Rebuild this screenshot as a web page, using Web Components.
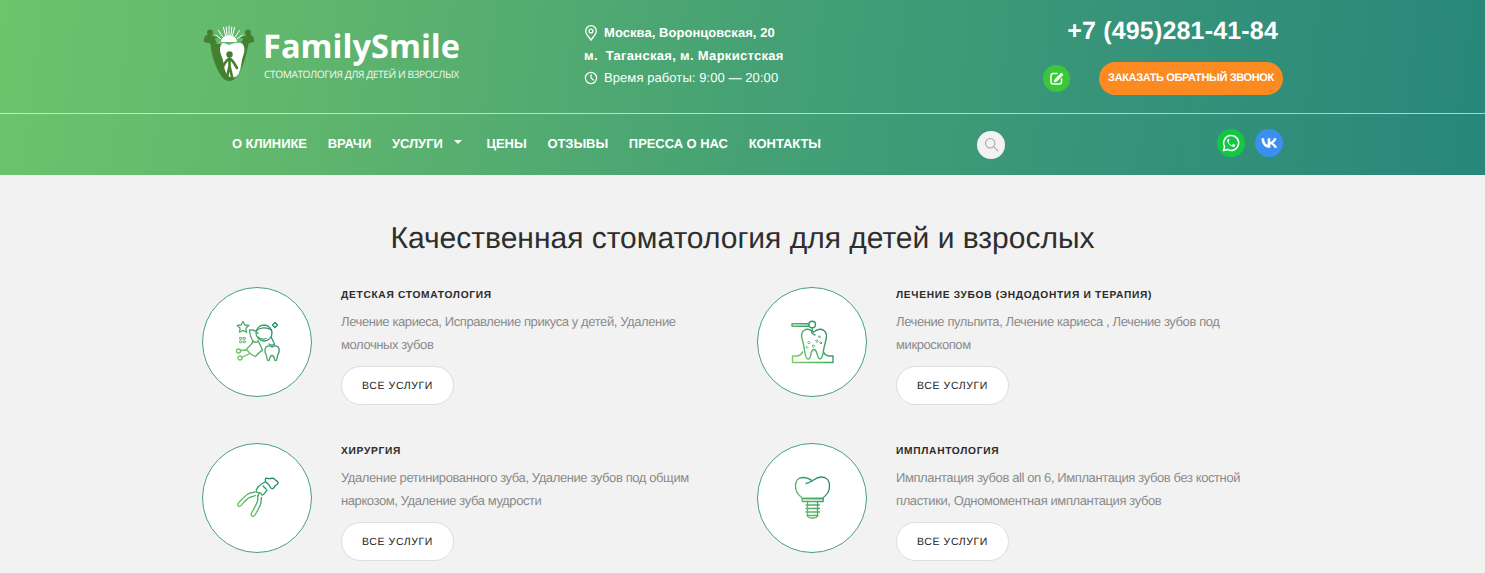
<!DOCTYPE html>
<html lang="ru"><head><meta charset="utf-8"><title>FamilySmile</title>
<style>
html,body{margin:0;padding:0;background:#f2f2f2;font-family:"Liberation Sans",Arial,sans-serif;overflow:hidden;height:573px;text-rendering:geometricPrecision}
</style></head><body>
<fs-header></fs-header>
<fs-services></fs-services>
<script>
const GRAD=`<defs><linearGradient id="g" gradientUnits="userSpaceOnUse" x1="33" y1="72" x2="78" y2="38"><stop offset="0" stop-color="#7ccf5e"/><stop offset="1" stop-color="#16806f"/></linearGradient></defs>`;
const ICONS={
fairy:`<g fill="none" stroke="url(#g)" stroke-width="1.300" stroke-linejoin="round" stroke-linecap="round">
<path d="M41 34.500l1.800 3.500 4 .5-2.900 2.800.7 4-3.600-1.900-3.600 1.900.7-4-2.900-2.800 4-.5z"/>
<path d="M73 35.500l2.500 2.500-2.500 2.500-2.500-2.500z"/>
<path d="M38 50.500h1.800v1.800h-1.800zM41.500 50.500h1.800v1.800h-1.800zM38 54h1.800v1.800h-1.800zM41.500 54h1.800v1.800h-1.800z" stroke-width=".9"/>
<circle cx="62" cy="46" r="8"/><path d="M54.500 43.500c3-3 10-4 15-.5M56 50c2 2 5 2.500 8 1.500M69 50c1.500 3 3 5 3.500 7.500-2 1-4 .5-5.500-.5"/>
<path d="M56 46.500c-2-3-5-4-8.500-3.500.5 4 1 8 3.500 11 1.500 1.500 3.500 1.500 5 .5"/>
<path d="M51 54c-1 3.500-4 6-6.500 8 2 3.500 5 6 9 7.500 2.500-3 5-5.500 7-6-1.500-4.500-3.500-8-4.500-10"/>
<path d="M44.500 63l-6 .5M47 67l-7.500 3.500"/><circle cx="36.500" cy="64" r="2"/><circle cx="38" cy="71" r="2"/>
<path d="M64 60c2-1.500 4-1.500 6 0 2-1.500 5-1.500 6.500.5 1.500 2.500.5 5-.5 7-.8 2-.8 4-1.500 5.500-.8 1-1.800.5-2-.5-.3-1.500-.3-4-2.500-4s-2.200 2.500-2.500 4c-.2 1-1.200 1.500-2 .5-.7-1.500-.7-3.500-1.500-5.500-1-2-2-4.500 0-7.500z"/>
</g>`,
tooth:`<g fill="none" stroke="url(#g)" stroke-width="1.400" stroke-linejoin="round" stroke-linecap="round">
<path d="M35 36.700h16.500v2.600H35z"/><circle cx="55.200" cy="37.500" r="3.300"/>
<path d="M55.200 41v3.500"/>
<path d="M55.500 44.500c-2.500-2-6-2.800-8.500-1-3 2-2.700 6.500-1.500 10 1 3 1.500 6.500 2 10 .5 3 1 8 3.500 8.500 2.500.300 2.500-4 3.500-7 .5-1.500 1.500-2.500 2.500-2.500s2 1 2.500 2.500c1 3 1.500 7 3.500 7 2.500-.3 3-5 3.500-8.500.5-3.500 1.500-7 2.300-10 1-3.500 1-8-2-10-3-2-7-1-10.300 1.500z"/>
<path d="M54.500 45c.5 1.500 2 2.500 3.500 3"/>
<path d="M45.500 65c-1 2.500-2.500 3.500-5 4h-5v6.500h40.500V69h-4.500c-2.500-.5-4-1.500-5-4"/>
<path d="M52 54.500l1.200 1.200-1.200 1.200-1.200-1.200zM60 53l1.200 1.200-1.200 1.200-1.200-1.200zM56.500 58l1.200 1.200-1.200 1.200-1.200-1.200zM50 59.500l1 1-1 1-1-1zM62.500 49l1 1-1 1-1-1zM64 55l1 1-1 1-1-1z" stroke-width=".9"/>
</g>`,
pliers:`<g fill="none" stroke="url(#g)" stroke-width="1.300" stroke-linejoin="round" stroke-linecap="round">
<path d="M64 35.500c1.500-.5 3 .5 4.500 0 2-.5 3.500-.5 4.500 1 .5 1 1.500 1.500 2.500 2 1 1 .5 2.500-.5 3-1 .5-2 1-2.500 2-.5 1.500-1.500 2.500-3 2-1.500-.5-1.500-2.500-2.500-3.500-1-1.500-3-2-3.500-3.500-.5-1.500-.5-2.500.5-3.500z"/>
<path d="M63 39c-2 1-5 2.500-7 5-1.500 2-2.500 3.500-1.500 5 1 1 2.500.5 4 1 1 .5 1 2 2 2s3-3 4.500-5"/>
<path d="M61 43l3 3M57.500 50l-2 3"/>
<path d="M53 49c-2 .5-4.500.5-7 2-3 2-6.500 5.500-9.500 9-1 1.200-1 2.700 0 3.200s2 0 2.800-1c2.500-3 6-6.700 9-8 1.500-.7 3.500-.7 5-1.700"/>
<path d="M56 52.500c-.5 2.500.5 4-1 7-1 2.500-3.500 7-5.500 10.500-.7 1.500-.2 2.700.8 3.200s2 0 2.700-1.200c2-3.500 4.500-7.500 5.500-10.500 1-3 .5-5 1-7"/>
</g>`,
implant:`<g fill="none" stroke="url(#g)" stroke-width="1.300" stroke-linejoin="round" stroke-linecap="round">
<path d="M46 34.500c-4.500 0-7.500 3-7.500 8 0 5 2 8.500 4.500 10.500 1.500 1 2 1.800 2.200 2.500h20.600c.2-.7.700-1.500 2.200-2.500 2.500-2 4.500-5.500 4.500-10.500s-3-8.500-8-8.500c-4 0-6 1.500-9 3.500-2 1.500-4 2.500-6.500 3"/>
<path d="M55.500 38c-2.500-2-5.500-3.500-9.500-3.500"/>
<path d="M45.200 55.500v3h21v-3z"/>
<path d="M50.500 58.500v14c0 1.500 1.500 2.500 5 2.500s5-1 5-2.500v-14"/>
<path d="M49 62h13.500M49 65.500h13.500M49 69h13.500M50 72.500h11"/>
</g>`
};

class FsLogo extends HTMLElement{
 constructor(){super();this.attachShadow({mode:'open'}).innerHTML=`<style>
 :host{display:flex;align-items:flex-start}
 svg{display:block;flex:none;margin-left:-2px}
 .t{margin-left:4px;padding-top:6px;color:#fff}
 .n{font:700 32.600px/40px "Open Sans","Noto Sans",sans-serif;margin-left:-1px}
 .s{font:400 10.200px/13px "Open Sans","Noto Sans",sans-serif;margin-top:2px;opacity:.93;white-space:nowrap;letter-spacing:-.43px}
 </style>
 <svg width="60" height="65" viewBox="0 0 60 65" aria-hidden="true">
  <path d="M10 22c6 2 14 3 19 3s13-1 20-3c-1 4-2 9-3 13-2 8-5 15-8 20-3 4-6 6-9 6s-6-2-9-7c-3-5-6-12-8-20-1-4-1-8-2-12z" fill="#44802f"/>
  <path d="M18.500 23c3-.5 6.500.5 10.500 2 4-1.500 8-2.500 11.500-2 4 1 4.500 6 3.500 10-1 3.500-2 6-2.500 10-.5 4-1.500 8-3 11-1 2-2.500 3-5 3.500-2 .3-5-.8-7-3.500-1.500-3-2.500-7-3-11-.5-4-2-6.500-3-10-1-4-.5-9 3-10z" fill="#fff"/>
  <circle cx="29.500" cy="34.500" r="3.200" fill="#44802f"/>
  <path d="M22 48c2-3 4-8 7.500-9.500 3.500 1.500 5.500 6.500 7.500 9.500M29.500 39v10M29.500 46l-3 13M29.500 46l3 13" fill="none" stroke="#44802f" stroke-width="2.600" stroke-linecap="round"/>
  <circle cx="10" cy="12.500" r="3" fill="#44802f"/><circle cx="48" cy="12.500" r="3" fill="#44802f"/>
  <path d="M4 22c-.5-3 .5-6 3-7 3-.5 5 .5 7 1.500l4 .5c-1 1-2.500 1.500-3.500 1.500l2.500 4.500c-4 .5-9 .5-13-1z" fill="#44802f"/>
  <path d="M54 22c.5-3-.5-6-3-7-3-.5-5 .5-7 1.500l-4 .5c1 1 2.500 1.500 3.500 1.500L41 23c4 .5 9 .5 13-1z" fill="#44802f"/>
  <g stroke="#fff" stroke-width="1" stroke-linecap="round">
   <path d="M29 15V6M25.500 15.500l-2-8M32.500 15.500l2-8M22.500 16.500l-4-6M35.500 16.500l4-6M20.500 18.500l-5-3.500M37.500 18.500l5-3.500M27 15l-.8-8M31 15l.8-8"/>
  </g>
  <path d="M21 22c0-9 16-9 16 0z" fill="#fff"/>
 </svg>
 <div class="t"><div class="n">FamilySmile</div><div class="s">СТОМАТОЛОГИЯ ДЛЯ ДЕТЕЙ И ВЗРОСЛЫХ</div></div>`;
 }
}
customElements.define('fs-logo',FsLogo);

class FsContacts extends HTMLElement{
 constructor(){super();this.attachShadow({mode:'open'}).innerHTML=`<style>
 :host{display:block;color:#fff;font:700 13px/22.500px "Liberation Sans",Arial,sans-serif;margin-left:-1px}
 .r{display:flex;align-items:center;height:22.500px;white-space:pre}
 svg{display:block;flex:none;margin-right:6px}
 .reg{font-weight:400;letter-spacing:.08px}
 .l2{letter-spacing:.3px}
 .l1{letter-spacing:.05px}
 </style>
 <div class="r"><svg width="14" height="16" viewBox="0 0 14 16" fill="none" stroke="#fff" stroke-width="1.300"><path d="M7 15C4.500 11.500 1.700 9 1.700 6A5.300 5.300 0 0 1 12.300 6C12.300 9 9.500 11.500 7 15z"/><circle cx="7" cy="6" r="1.900"/></svg><span class="l1">Москва, Воронцовская, 20</span></div>
 <div class="r"><span class="l2">м.  Таганская, м. Маркистская</span></div>
 <div class="r"><svg width="14" height="14" viewBox="0 0 14 14" fill="none" stroke="#fff" stroke-width="1.200"><circle cx="7" cy="7" r="5.600"/><path d="M7 3.500V7l2.500 2" stroke-linecap="round"/></svg><span class="reg">Время работы: 9:00 — 20:00</span></div>`;
 }
}
customElements.define('fs-contacts',FsContacts);

class FsCallback extends HTMLElement{
 constructor(){super();this.attachShadow({mode:'open'}).innerHTML=`<style>
 :host{display:flex;flex-direction:column;align-items:flex-end}
 .p{font:700 25px/30px "Liberation Sans",Arial,sans-serif;color:#fff;margin:16px 5px 0 0;white-space:pre;letter-spacing:.18px}
 .a{display:flex;align-items:center;margin-top:16px;gap:29px}
 .e{width:27px;height:27px;border-radius:50%;background:#3ac83a;display:flex;align-items:center;justify-content:center}
 .b{width:184px;height:33px;border-radius:17px;background:#fb8a20;color:#fff;font:700 11px/33px "Liberation Sans",Arial,sans-serif;text-align:center;white-space:nowrap;letter-spacing:-.36px}
 </style>
 <div class="p">+7 (495)281-41-84</div>
 <div class="a"><div class="e"><svg width="15" height="15" viewBox="0 0 15 15" fill="none" stroke="#fff" stroke-width="1.500" stroke-linecap="round" stroke-linejoin="round"><path d="M8 2.500H4A2 2 0 0 0 2 4.500v6.500a2 2 0 0 0 2 2h6.500a2 2 0 0 0 2-2V8"/><path d="M12.500 2.500L6.500 8.500l-1 2 2-.8 6-6z"/></svg></div><div class="b">ЗАКАЗАТЬ ОБРАТНЫЙ ЗВОНОК</div></div>`;
 }
}
customElements.define('fs-callback',FsCallback);

class FsNav extends HTMLElement{
 constructor(){super();this.attachShadow({mode:'open'}).innerHTML=`<style>
 :host{display:flex;align-items:center;height:59px;width:1081px;margin:0 auto;box-sizing:border-box;padding-left:30px;color:#fff}
 nav{display:flex;gap:20.800px;font:700 13px/20px "Liberation Sans",Arial,sans-serif;white-space:nowrap;width:745px;letter-spacing:-.06px}
 .dd{display:flex;align-items:center}
 .dd i{display:block;width:0;height:0;border:4px solid transparent;border-top:4.500px solid #fff;border-bottom:0;margin:-3px 4px 0 11px}
 .s{width:28px;height:28px;border-radius:50%;background:#f2f2f2;display:flex;align-items:center;justify-content:center;margin-top:2px}
 .soc{margin-left:auto;display:flex;gap:10px;margin-top:-1px}
 .soc div{width:28px;height:28px;border-radius:50%;display:flex;align-items:center;justify-content:center}
 .w{background:#13c743}.v{background:#3b8ff0}
 svg{display:block}
 </style>
 <nav><span>О КЛИНИКЕ</span><span>ВРАЧИ</span><span class="dd">УСЛУГИ<i></i></span><span>ЦЕНЫ</span><span>ОТЗЫВЫ</span><span>ПРЕССА О НАС</span><span>КОНТАКТЫ</span></nav>
 <div class="s"><svg width="15" height="15" viewBox="0 0 15 15" fill="none" stroke="#aaa" stroke-width="1.100"><circle cx="6.200" cy="6.200" r="4.700"/><path d="M9.700 9.700l4.300 4.300" stroke-linecap="round"/></svg></div>
 <div class="soc"><div class="w"><svg width="18" height="18" viewBox="0 0 18 18"><path d="M1.500 16.500l1.100-3.900A7.500 7.500 0 1 1 5.500 15.500z" fill="none" stroke="#fff" stroke-width="1.500" stroke-linejoin="round"/><path d="M6.500 4.900c-.4 0-1 .5-1.200 1.300-.2 1 .2 2.300 1.500 3.900 1.500 1.700 3.200 2.800 4.600 2.800 1 0 1.800-.7 1.900-1.500.1-.4 0-.6-.2-.7l-1.700-.8c-.3-.1-.5 0-.6.2l-.6.8c-.2.200-.4.200-.7.100-1.300-.5-2.300-1.500-3-2.600-.1-.2-.1-.4.100-.6l.5-.6c.1-.2.100-.4 0-.6L7.300 5.200c-.2-.3-.4-.3-.8-.3z" fill="#fff"/></svg></div>
 <div class="v"><svg width="17" height="10" viewBox="0 0 18 11"><path fill="#fff" d="M9.800 10.800C3.700 10.800.3 6.700.1.200h3c.1 4.800 2.200 6.800 3.900 7.200V.2h2.900v4.100C11.600 4.100 13.300 2.300 13.900.2h2.800c-.5 2.600-2.400 4.500-3.800 5.300 1.400.7 3.600 2.400 4.500 5.300h-3.100c-.7-2.100-2.300-3.700-4.400-3.900v3.900z"/></svg></div></div>`;
 }
}
customElements.define('fs-nav',FsNav);

class FsHeader extends HTMLElement{
 constructor(){super();this.attachShadow({mode:'open'}).innerHTML=`<style>
 :host{display:block;height:175px;background:linear-gradient(97deg,#6cc46c 0%,#5fb56d 22%,#46a274 50%,#379379 75%,#27877a 100%)}
 .top{height:113px;border-bottom:1px solid rgba(255,255,255,.62)}
 .in{width:1081px;margin:0 auto;display:flex;height:100%}
 fs-logo{margin-top:20px;width:383px;flex:none}
 fs-contacts{margin-top:22px}
 fs-callback{margin-left:auto}
 </style>
 <div class="top"><div class="in"><fs-logo></fs-logo><fs-contacts></fs-contacts><fs-callback></fs-callback></div></div>
 <fs-nav></fs-nav>`;
 }
}
customElements.define('fs-header',FsHeader);

class FsService extends HTMLElement{
 constructor(){super();
 const ic=this.getAttribute('icon');
 this.attachShadow({mode:'open'}).innerHTML=`<style>
 :host{display:flex;align-items:flex-start;height:155.500px}
 .c{width:110px;height:110px;box-sizing:border-box;border:1px solid #45a081;border-radius:50%;background:#fff;flex:none;margin-right:29px}
 svg{display:block;margin:-1px}
 h3{margin:2px 0 0;font:700 10.200px/14px "Liberation Sans",Arial,sans-serif;letter-spacing:.7px;color:#2b2b2b;white-space:nowrap}
 p{margin:7px 0 0;font:400 13px/23px "Liberation Sans",Arial,sans-serif;color:#8a8a8a;width:350px;letter-spacing:-.4px}
 .b{display:block;width:113px;height:39px;box-sizing:border-box;border:1px solid #ddd;border-radius:20px;background:#fff;margin-top:10px;font:400 10.500px/38px "Liberation Sans",Arial,sans-serif;letter-spacing:.6px;text-align:center;color:#222}
 </style>
 <div class="c"><svg width="110" height="110" viewBox="0 0 110 110">${GRAD}${ICONS[ic]}</svg></div>
 <div class="t"><h3><slot name="title"></slot></h3><p><slot></slot></p><div class="b">ВСЕ УСЛУГИ</div></div>`;
 }
}
customElements.define('fs-service',FsService);

class FsServices extends HTMLElement{
 constructor(){super();this.attachShadow({mode:'open'}).innerHTML=`<style>
 :host{display:block;width:1081px;margin:0 auto}
 h1{margin:0;padding:47px 0 31px;font:400 30px/34px "Liberation Sans",Arial,sans-serif;color:#2e2e2e;text-align:center;white-space:nowrap}
 .g{display:grid;grid-template-columns:555px 526px}
 </style>
 <h1>Качественная стоматология для детей и взрослых</h1>
 <div class="g">
 <fs-service icon="fairy"><span slot="title">ДЕТСКАЯ СТОМАТОЛОГИЯ</span>Лечение кариеса, Исправление прикуса у детей, Удаление молочных зубов</fs-service>
 <fs-service icon="tooth"><span slot="title">ЛЕЧЕНИЕ ЗУБОВ (ЭНДОДОНТИЯ И ТЕРАПИЯ)</span>Лечение пульпита, Лечение кариеса , Лечение зубов под микроскопом</fs-service>
 <fs-service icon="pliers"><span slot="title">ХИРУРГИЯ</span>Удаление ретинированного зуба, Удаление зубов под общим наркозом, Удаление зуба мудрости</fs-service>
 <fs-service icon="implant"><span slot="title">ИМПЛАНТОЛОГИЯ</span>Имплантация зубов all on 6, Имплантация зубов без костной пластики, Одномоментная имплантация зубов</fs-service>
 </div>`;
 }
}
customElements.define('fs-services',FsServices);
</script>
</body></html>
